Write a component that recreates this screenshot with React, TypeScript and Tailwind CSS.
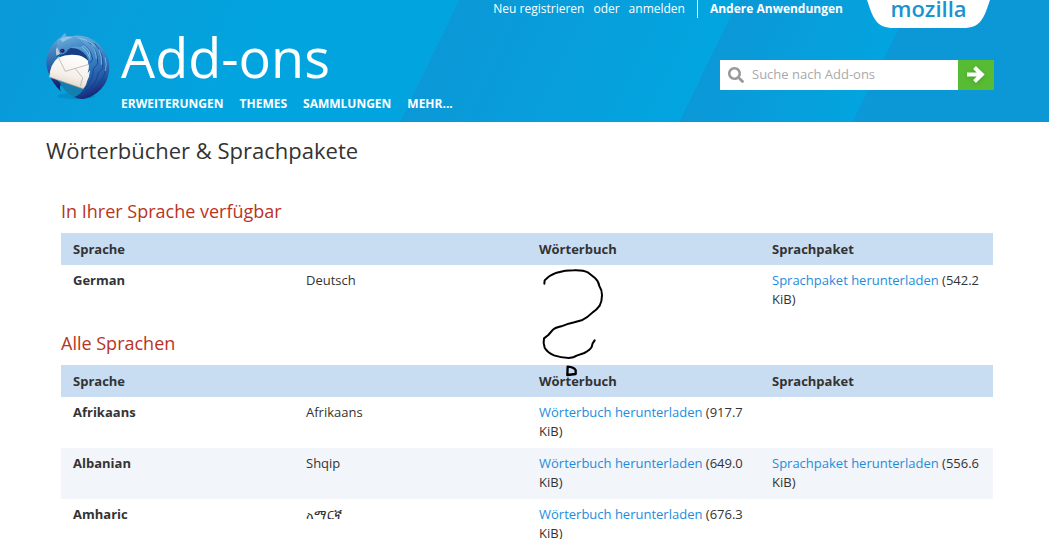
import React from "react";
import { FaSearch } from "react-icons/fa";

type Pack = { kind: "Wörterbuch" | "Sprachpaket"; size: string };
type Language = {
  name: string;
  native: string;
  dictionary?: Pack;
  pack?: Pack;
  note?: React.ReactNode;
};

const local: Language[] = [
  {
    name: "German",
    native: "Deutsch",
    pack: { kind: "Sprachpaket", size: "542.2" },
    note: <Scribble />,
  },
];

const all: Language[] = [
  { name: "Afrikaans", native: "Afrikaans", dictionary: { kind: "Wörterbuch", size: "917.7" } },
  {
    name: "Albanian",
    native: "Shqip",
    dictionary: { kind: "Wörterbuch", size: "649.0" },
    pack: { kind: "Sprachpaket", size: "556.6" },
  },
  { name: "Amharic", native: "አማርኛ", dictionary: { kind: "Wörterbuch", size: "676.3" } },
];

function Scribble() {
  return (
    <svg
      aria-hidden="true"
      viewBox="0 0 270 360"
      className="pointer-events-none absolute -top-[5px] left-[3px] h-[120px] w-[90px]"
      fill="none"
      stroke="#000"
      strokeWidth="6"
      strokeLinecap="round"
      strokeLinejoin="round"
    >
      <path d="M43 71 L44 61 Q58 46 80 38 Q105 31 132 31 Q160 30 175 38 L195 54 Q206 64 208 78 Q216 90 216 106 Q216 124 209 137 Q200 150 188 157 Q172 173 155 181 L133 187 L116 191 L94 199 Q76 203 69 209 L55 225 L42 235 Q39 249 44 263 Q53 278 72 286 Q92 293 116 294 Q132 293 140 287 L163 279 Q180 270 185 261 L188 250 L194 241" />
      <path strokeWidth="7" d="M113 320 L112 345 L137 342 L137 331 Q132 321 113 320Z" />
    </svg>
  );
}

function BirdLogo() {
  return (
    <svg viewBox="39 30 204 216" className="h-[72px] w-[68px] shrink-0" aria-hidden="true">
      <defs>
        <linearGradient id="wing" x1="0.3" y1="0" x2="0.6" y2="1">
          <stop offset="0" stopColor="#6fb0dd" />
          <stop offset="0.4" stopColor="#3d86c6" />
          <stop offset="0.75" stopColor="#2058a4" />
          <stop offset="1" stopColor="#131c70" />
        </linearGradient>
        <linearGradient id="tail" x1="0.3" y1="0" x2="0.4" y2="1">
          <stop offset="0" stopColor="#5fa6d8" />
          <stop offset="0.5" stopColor="#2a62ab" />
          <stop offset="1" stopColor="#121562" />
        </linearGradient>
        <linearGradient id="paper" x1="0.6" y1="0" x2="0.3" y2="1">
          <stop offset="0" stopColor="#ffffff" />
          <stop offset="0.6" stopColor="#f5efea" />
          <stop offset="1" stopColor="#dccbbb" />
        </linearGradient>
        <linearGradient id="head" x1="0.2" y1="0" x2="0.6" y2="1">
          <stop offset="0" stopColor="#76b8e2" />
          <stop offset="1" stopColor="#3379bb" />
        </linearGradient>
      </defs>
      <ellipse cx="140" cy="228" rx="56" ry="10" fill="#0678a8" opacity="0.4" />
      {/* left wing */}
      <path d="M90 52 Q52 80 49 122 Q48 145 59 166 Q66 188 92 214 Q88 202 91 195 Q101 201 112 205 L62 165 Q66 130 88 104Z" fill="url(#tail)" />
      {/* water under the letter */}
      <path d="M84 178 L168 196 Q164 226 134 231 Q104 222 84 178Z" fill="#127fae" />
      {/* shaded breast */}
      <path d="M88 112 Q98 72 142 74 Q176 84 186 124 L178 150 L92 122Z" fill="#173f85" />
      {/* letter */}
      <path d="M84 113 Q108 102 138 105 Q160 107 174 122 L180 152 Q178 186 160 206 L58 171 Q60 132 84 113Z" fill="url(#paper)" />
      <path d="M86 114 L106 154 L174 134 M136 146 L158 173 L151 198" fill="none" stroke="#aaa19b" strokeWidth="2" />
      <path d="M58 171 L160 206" stroke="#c0a78e" strokeWidth="2" />
      {/* right wing */}
      <path
        d="M104 58 Q134 38 174 52 Q216 70 232 110 Q246 152 225 191 Q204 226 164 236 Q148 239 132 231 Q152 224 158 211 Q168 202 171 184 Q178 172 181 151 L173 159 Q180 138 174 128 Q176 108 155 94 Q136 80 108 86Z"
        fill="url(#wing)"
      />
      {/* feathers */}
      <g fill="none" stroke="#1a3a8a" strokeWidth="3" opacity="0.7">
        <path d="M150 66 Q183 84 188 118 L180 130" />
        <path d="M172 62 Q206 88 203 132 L190 146" />
        <path d="M194 70 Q224 102 218 146 L202 163" />
        <path d="M190 146 Q190 182 163 208" />
        <path d="M204 162 Q198 198 154 225" />
        <path d="M228 140 Q224 186 178 224" />
      </g>
      <g fill="none" stroke="#a5d4f0" strokeWidth="3" opacity="0.65">
        <path d="M128 55 Q168 51 196 80" />
        <path d="M134 65 Q164 72 178 94 l2 16" />
        <path d="M184 74 Q198 90 199 116" />
        <path d="M207 88 Q217 111 214 134" />
        <path d="M225 112 Q232 133 226 153" />
        <path d="M156 81 Q174 94 181 118" />
      </g>
      {/* head and crest */}
      <path
        d="M80 108 Q76 90 82 77 Q76 62 91 55 Q96 46 106 38 L108 49 Q137 45 156 63 Q168 75 150 80 Q128 77 114 89 Q105 105 88 104Z"
        fill="url(#head)"
      />
      <path d="M90 58 Q103 46 130 53 Q112 55 98 67Z" fill="#a3d2ee" opacity="0.7" />
      <path d="M81 81 Q74 94 81 109 L91 103Z" fill="#b8ccd9" />
      <path d="M80 109 L91 103" stroke="#173676" strokeWidth="3" />
      <ellipse cx="97" cy="92" rx="7" ry="6" fill="#182368" />
      <circle cx="96" cy="91" r="2" fill="#b2528e" />
    </svg>
  );
}

function Download({ item }: { item?: Pack }) {
  if (!item) return null;
  return (
    <>
      <a href="#" className="text-[#1e8cdc]">{item.kind} herunterladen</a> ({item.size} KiB)
    </>
  );
}

function LanguageTable({ title, rows }: { title: string; rows: Language[] }) {
  return (
    <section>
      <h2 className="mb-2.5 text-lg leading-6 text-[#b8341e]">{title}</h2>
      <table className="w-full table-fixed border-collapse text-left text-[13px] leading-[19px]" aria-label={title}>
        <thead className="bg-[#c9ddf2]">
          <tr>
            <th className="w-1/4 px-3 pt-[7px] pb-1.5">Sprache</th>
            <th className="w-1/4 px-3 pt-[7px] pb-1.5"></th>
            <th className="w-1/4 px-3 pt-[7px] pb-1.5">Wörterbuch</th>
            <th className="w-1/4 px-3 pt-[7px] pb-1.5">Sprachpaket</th>
          </tr>
        </thead>
        <tbody>
          {rows.map((row) => (
            <tr key={row.name} className="align-top even:bg-[#f2f5fa]">
              <th className="px-3 pt-1.5 pb-[7px]">{row.name}</th>
              <td className="px-3 pt-1.5 pb-[7px]">{row.native}</td>
              <td className="relative px-3 pt-1.5 pb-[7px]">
                <Download item={row.dictionary} />
                {row.note}
              </td>
              <td className="px-3 pt-1.5 pb-[7px]">
                <Download item={row.pack} />
              </td>
            </tr>
          ))}
        </tbody>
      </table>
    </section>
  );
}

export default function App() {
  return (
    <div className="h-screen overflow-hidden bg-white font-['Open_Sans','Noto_Sans',sans-serif] text-[#333]">
      <header className="flex justify-between bg-[linear-gradient(116deg,#0b99d8_0px,#02a4df_240px,#02a4df_413px,#0c98d7_413px,#02a5e0_664px,#0c98d7_664px,#02a4df_820px,#0c98d7_820px,#0c98d7_1000px)] pr-[55px] pl-[43px] text-white">
        <div className="flex gap-2.5 pt-[30px]">
          <BirdLogo />
          <div>
            <a href="#" className="block text-[54px] leading-[54px]">Add-ons</a>
            <nav className="flex gap-4 pt-[11px] pb-[9px] text-xs leading-[18px] font-bold">
              <a href="#">ERWEITERUNGEN</a>
              <a href="#">THEMES</a>
              <a href="#">SAMMLUNGEN</a>
              <a href="#">MEHR...</a>
            </nav>
          </div>
        </div>
        <div className="flex flex-col items-end gap-8">
          <div className="flex items-start pr-1">
            <div className="flex gap-[9px] text-xs leading-[18px]">
              <a href="#">Neu registrieren</a>
              <span>oder</span>
              <a href="#">anmelden</a>
            </div>
            <a href="#" className="ml-3 border-l border-white pl-3 text-xs leading-[18px] font-bold">
              Andere Anwendungen
            </a>
            <a href="#" className="relative ml-6 flex h-7 w-[123px] justify-center">
              <svg viewBox="0 0 123 28" className="absolute inset-0 h-full w-full" aria-hidden="true">
                <path d="M0 0 H123 C117 18 114 28 96 28 H27 C9 28 6 18 0 0Z" fill="#fff" />
              </svg>
              <span className="relative text-[22px] leading-4 font-semibold text-[#1b93d0]">mozilla</span>
            </a>
          </div>
          <form className="flex" onSubmit={(e) => e.preventDefault()}>
            <label className="flex h-[30px] w-[238px] items-center gap-2 bg-white pl-2">
              <FaSearch className="size-4 text-[#999]" aria-hidden="true" />
              <input
                type="search"
                aria-label="Suche nach Add-ons"
                placeholder="Suche nach Add-ons"
                className="min-w-0 flex-1 text-[13px] text-[#333] outline-none placeholder:text-[#a9a9a9]"
              />
            </label>
            <button type="submit" aria-label="Suchen" className="flex w-9 items-center justify-center bg-[#57bb33]">
              <svg viewBox="0 0 18 18" className="size-[18px] drop-shadow-sm" fill="none" stroke="#fff" strokeWidth="4" aria-hidden="true">
                <path d="M0 8.500H14M7.500 1.500L14.800 8.500L7.500 15.500" />
              </svg>
            </button>
          </form>
        </div>
      </header>
      <main className="pr-14 pl-[46px]">
        <h1 className="pt-3 text-[22px] leading-8">Wörterbücher &amp; Sprachpakete</h1>
        <div className="flex flex-col gap-[15px] pt-[33px] pl-[15px]">
          <LanguageTable title="In Ihrer Sprache verfügbar" rows={local} />
          <LanguageTable title="Alle Sprachen" rows={all} />
        </div>
      </main>
    </div>
  );
}
